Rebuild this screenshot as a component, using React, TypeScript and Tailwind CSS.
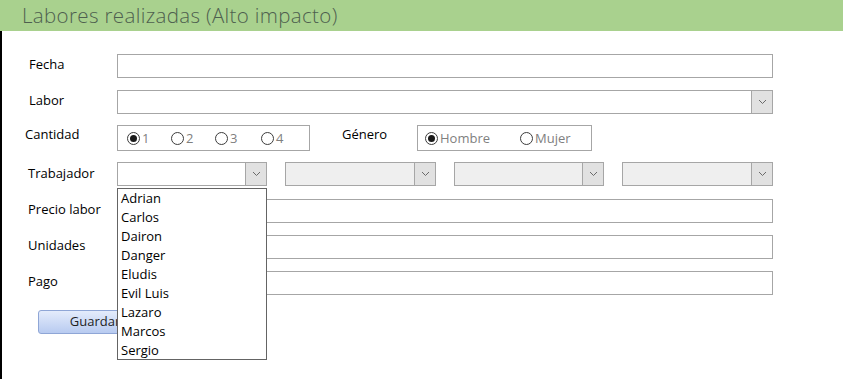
import React from "react";

const font = { fontFamily: '"Open Sans", "Noto Sans", "Liberation Sans", sans-serif' };

function Chevron() {
  return (
    <svg width="9" height="6" viewBox="0 0 9 6" className="block">
      <path d="M1 1 L4.5 4.5 L8 1" fill="none" stroke="#6a6a6a" strokeWidth="1" />
    </svg>
  );
}

function Combo({ width, gray }: { width: string; gray?: boolean }) {
  return (
    <div className={`${width} h-[24px] flex border border-[#a6a6a6] ${gray ? "bg-[#efefef]" : "bg-white"}`}>
      <div className="flex-1" />
      <div className="w-[21px] h-full bg-[#e1e1e1] border-l border-[#a6a6a6] flex items-center justify-center">
        <Chevron />
      </div>
    </div>
  );
}

function Radio({ checked, label, w }: { checked?: boolean; label: string; w: string }) {
  return (
    <div className={`flex items-center ${w}`}>
      <div className="w-[13px] h-[13px] rounded-full border border-[#3c3c3c] flex items-center justify-center bg-white">
        {checked && <div className="w-[7px] h-[7px] rounded-full bg-[#1a1a1a]" />}
      </div>
      <span className="ml-[2px] text-[13px] leading-none text-[#7f7f7f]">{label}</span>
    </div>
  );
}

export default function App() {
  const names = ["Adrian", "Carlos", "Dairon", "Danger", "Eludis", "Evil Luis", "Lazaro", "Marcos", "Sergio"];
  return (
    <div className="w-[843px] h-[379px] bg-white overflow-hidden" style={font}>
      <div className="h-[31px] bg-[#a9d18e] pl-[22px] text-[20.5px] font-light leading-[31px] text-[#4e5f4f] tracking-[0.35px]">
        Labores realizadas (Alto impacto)
      </div>
      <div className="flex h-[348px]">
        <div className="w-[2px] bg-black" />
        <div className="flex-1 relative text-[13px] text-black pt-[23px]">
          {/* Fecha */}
          <div className="flex items-center h-[24px]">
            <div className="w-[115px] pl-[27px] -mt-[2px]">Fecha</div>
            <div className="w-[656px] h-[24px] border border-[#a6a6a6] bg-white" />
          </div>
          {/* Labor */}
          <div className="flex items-center h-[24px] mt-[12px]">
            <div className="w-[115px] pl-[27px] -mt-[2px]">Labor</div>
            <Combo width="w-[656px]" />
          </div>
          {/* Cantidad / Genero */}
          <div className="flex items-start h-[26px] mt-[11px]">
            <div className="w-[115px] pl-[23px] mt-[0px]">Cantidad</div>
            <div className="w-[193px] h-[26px] border border-[#a6a6a6] flex items-center pl-[9px]">
              <Radio checked label="1" w="w-[44px]" />
              <Radio label="2" w="w-[44px]" />
              <Radio label="3" w="w-[46px]" />
              <Radio label="4" w="w-[40px]" />
            </div>
            <div className="w-[107px] pl-[32px]">Género</div>
            <div className="w-[175px] h-[26px] border border-[#a6a6a6] flex items-center pl-[7px]">
              <Radio checked label="Hombre" w="w-[95px]" />
              <Radio label="Mujer" w="w-[60px]" />
            </div>
          </div>
          {/* Trabajador */}
          <div className="flex items-center h-[24px] mt-[11px]">
            <div className="w-[115px] pl-[26px] -mt-[1px]">Trabajador</div>
            <Combo width="w-[150px]" />
            <div className="w-[18px]" />
            <Combo width="w-[151px]" gray />
            <div className="w-[18px]" />
            <Combo width="w-[150px]" gray />
            <div className="w-[18px]" />
            <Combo width="w-[151px]" gray />
          </div>
          {/* Precio labor */}
          <div className="flex items-center h-[24px] mt-[13px]">
            <div className="w-[115px] pl-[26px] -mt-[3px]">Precio labor</div>
            <div className="w-[656px] h-[24px] border border-[#a6a6a6] bg-white" />
          </div>
          {/* Unidades */}
          <div className="flex items-center h-[24px] mt-[12px]">
            <div className="w-[115px] pl-[26px] -mt-[3px]">Unidades</div>
            <div className="w-[656px] h-[24px] border border-[#a6a6a6] bg-white" />
          </div>
          {/* Pago */}
          <div className="flex items-center h-[24px] mt-[12px]">
            <div className="w-[115px] pl-[26px] -mt-[3px]">Pago</div>
            <div className="w-[656px] h-[24px] border border-[#a6a6a6] bg-white" />
          </div>
          {/* Guardar */}
          <div className="mt-[15px] pl-[36px]">
            <div className="w-[112px] h-[24px] rounded-[3px] border border-[#8fa6d6] bg-gradient-to-b from-[#e4ecfb] to-[#b8cbf0] flex items-center justify-center text-[13px] text-[#1e1e1e] pl-[2px]">
              Guardar
            </div>
          </div>

          {/* Dropdown list overlay */}
          <div className="absolute left-[115px] top-[157px] w-[150px] h-[172px] bg-white border border-[#646464] pl-[3px] pt-[0px]">
            {names.map((n) => (
              <div key={n} className="h-[19px] leading-[19px] text-[13px] text-black">
                {n}
              </div>
            ))}
          </div>
        </div>
      </div>
    </div>
  );
}
